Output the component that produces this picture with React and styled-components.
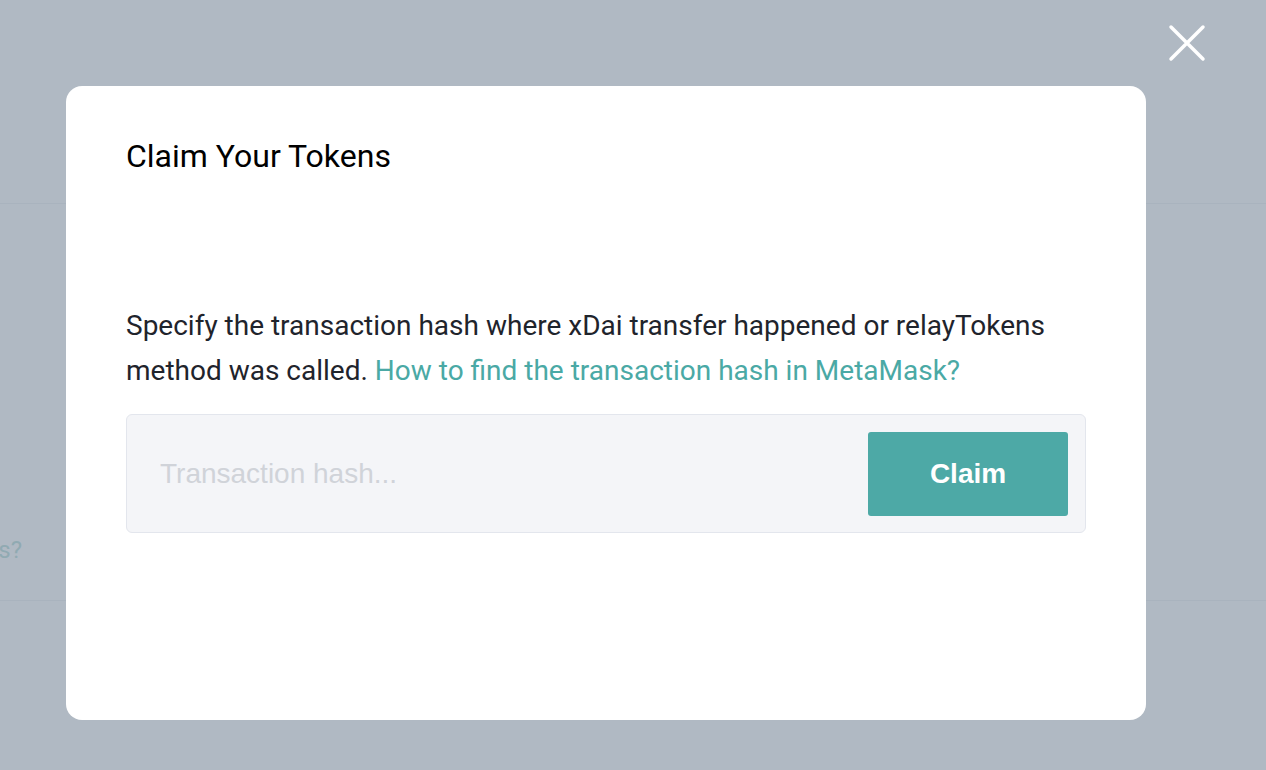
import React from "react";
import styled, { createGlobalStyle } from "styled-components";

const GlobalStyle = createGlobalStyle`
  * { box-sizing: border-box; }
  html, body { margin: 0; padding: 0; height: 100%; }
  body {
    background: #ffffff;
    font-family: Roboto, "Noto Sans", sans-serif;
    overflow: hidden;
  }
`;

const Page = styled.div`
  width: 1266px;
  height: 770px;
  display: flex;
  flex-direction: column;
  background: #ffffff;
`;

const Header = styled.header`
  height: 203px;
  flex: none;
`;

const Section = styled.section`
  height: 398px;
  flex: none;
  border-top: 1px solid #f0f2f4;
  border-bottom: 1px solid #f0f2f4;
  display: flex;
  flex-direction: column;
  justify-content: flex-end;
  padding-bottom: 36px;
`;

const ClippedCell = styled.div`
  width: 22px;
  overflow: hidden;
  display: flex;
  justify-content: flex-end;
  white-space: nowrap;
  font-family: Roboto, sans-serif;
  font-size: 24px;
  line-height: 28px;
  color: #bfe0dc;
`;

const Backdrop = styled.div`
  position: fixed;
  inset: 0;
  background: rgba(97, 116, 136, 0.5);
  padding: 86px 120px 50px 66px;
  display: flex;
`;

const CloseButton = styled.button`
  position: absolute;
  top: 24px;
  right: 60px;
  width: 38px;
  height: 38px;
  padding: 0;
  border: none;
  background: transparent;
  display: flex;
  align-items: center;
  justify-content: center;
  cursor: pointer;
`;

const Modal = styled.div`
  flex: 1;
  background: #ffffff;
  border-radius: 16px;
  padding: 51px 60px 0 60px;
  display: flex;
  flex-direction: column;
`;

const Title = styled.h2`
  margin: 0;
  font-family: Roboto, sans-serif;
  font-weight: 400;
  font-size: 32px;
  line-height: normal;
  color: #000000;
`;

const Description = styled.p`
  margin: 128px 0 0 0;
  font-family: Roboto, sans-serif;
  font-size: 28px;
  line-height: 45px;
  color: #1f242c;
`;

const Link = styled.a`
  color: #4aa9a5;
  text-decoration: none;
`;

const InputBox = styled.form`
  margin-top: 21px;
  height: 119px;
  background: #f4f5f8;
  border: 1px solid #e3e6ed;
  border-radius: 6px;
  display: flex;
  align-items: center;
  padding: 0 17px 0 33px;
  gap: 20px;
`;

const HashInput = styled.input`
  flex: 1;
  min-width: 0;
  border: none;
  outline: none;
  background: transparent;
  font-family: "Liberation Sans", Arial, sans-serif;
  font-size: 28px;
  color: #333;
  padding: 0;
  &::placeholder {
    color: #d0d3d9;
  }
`;

const ClaimButton = styled.button`
  width: 200px;
  height: 84px;
  border: none;
  border-radius: 3px;
  background: #4da9a6;
  color: #ffffff;
  font-family: "Liberation Sans", Arial, sans-serif;
  font-weight: 700;
  font-size: 28px;
  cursor: pointer;
`;

export default function App() {
  return (
    <>
      <GlobalStyle />
      <Page>
        <Header />
        <Section>
          <ClippedCell>
            <span>Tokens?</span>
          </ClippedCell>
        </Section>
      </Page>
      <Backdrop>
        <CloseButton aria-label="Close">
          <svg width="38" height="38" viewBox="0 0 38 38">
            <path
              d="M3 3 L35 35 M35 3 L3 35"
              stroke="#ffffff"
              strokeWidth="3.5"
              strokeLinecap="round"
            />
          </svg>
        </CloseButton>
        <Modal>
          <Title>Claim Your Tokens</Title>
          <Description>
            Specify the transaction hash where xDai transfer happened or relayTokens
            method was called.{" "}
            <Link href="#">How to find the transaction hash in MetaMask?</Link>
          </Description>
          <InputBox onSubmit={(e) => e.preventDefault()}>
            <HashInput placeholder="Transaction hash..." />
            <ClaimButton type="submit">Claim</ClaimButton>
          </InputBox>
        </Modal>
      </Backdrop>
    </>
  );
}
